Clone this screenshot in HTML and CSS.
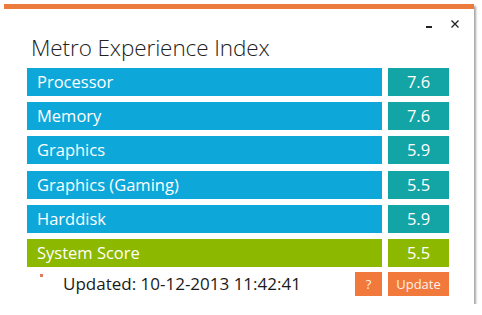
FILE: index.html
```html
<!DOCTYPE html>
<html lang="en">
<head>
<meta charset="UTF-8">
<title>Metro Experience Index</title>
<link rel="stylesheet" href="styles.css">
</head>
<body>

<div class="fenetre">
  <div class="controles">
    <span class="min"></span>
    <svg class="fermer" width="8" height="8" viewBox="0 0 8 8">
      <path d="M0.5 0.5 L7.5 7.5 M7.5 0.5 L0.5 7.5" stroke="#222" stroke-width="1.3"/>
    </svg>
  </div>
  <h1>Metro Experience Index</h1>

  <div class="scores">
    <div class="nom">Processor</div><div class="note">7.6</div>
    <div class="nom">Memory</div><div class="note">7.6</div>
    <div class="nom">Graphics</div><div class="note">5.9</div>
    <div class="nom">Graphics (Gaming)</div><div class="note">5.5</div>
    <div class="nom">Harddisk</div><div class="note">5.9</div>
    <div class="nom total">System Score</div><div class="note total">5.5</div>
  </div>

  <div class="pied">
    <span class="point"></span>
    <span class="maj">Updated: 10-12-2013 11:42:41</span>
    <button class="btn aide">?</button>
    <button class="btn maj-btn">Update</button>
  </div>
</div>

</body>
</html>
```

FILE: styles.css
```css
* { margin: 0; padding: 0; box-sizing: border-box; }

body {
  font-family: "Open Sans", "Noto Sans", sans-serif;
  background: #fff;
  color: #222;
}

.fenetre {
  position: relative;
  margin: 4px 0 0 4px;
  width: 470px;
  height: 300px;
  border-top: 5px solid #ec7b3e;
  box-shadow: 2px 2px 2px rgba(0,0,0,0.35);
  padding: 0 0 0 23px;
}

.controles {
  position: absolute;
  top: 11px;
  right: 15px;
  display: flex;
  align-items: center;
  gap: 19px;
}

.min {
  width: 6px;
  height: 2px;
  background: #222;
  margin-top: 6px;
}

.fermer { display: block; }

h1 {
  font-weight: 300;
  font-size: 22.5px;
  color: #222;
  padding: 23px 0 0 4px;
  height: 59px;
  letter-spacing: -0.1px;
}

.scores {
  display: grid;
  grid-template-columns: 355px 61px;
  column-gap: 6px;
  row-gap: 6.2px;
}

.nom, .note {
  height: 28px;
  line-height: 28px;
  font-size: 16.5px;
  color: #fff;
}

.nom {
  background: #0da7d9;
  padding-left: 10px;
}

.note {
  background: #13a4a6;
  text-align: center;
}

.nom.total, .note.total { background: #8cb800; }

.pied {
  display: flex;
  align-items: center;
  width: 422px;
  height: 24px;
  margin-top: 5px;
}

.point {
  width: 3px;
  height: 3px;
  background: #e07a5a;
  margin: 0 0 16px 13px;
}

.maj {
  font-size: 17px;
  margin-left: 20px;
  flex: 1;
  color: #1a1a1a;
}

.btn {
  background: #f0793b;
  border: none;
  font-family: inherit;
  font-size: 13px;
  height: 24px;
  color: #fff1e8;
}

.btn.aide {
  width: 27px;
  margin-right: 6px;
}

.btn.maj-btn { width: 61px; }
```
